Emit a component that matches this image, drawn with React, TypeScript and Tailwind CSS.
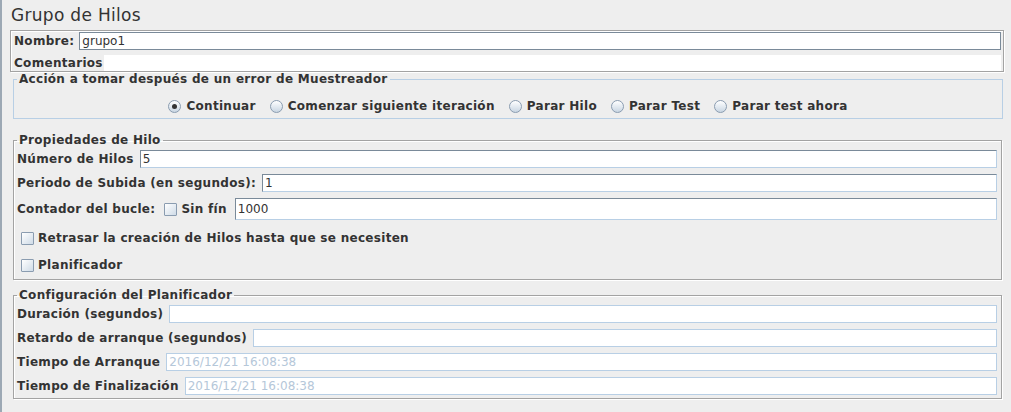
import React from "react";

function Check({ className = "" }: { className?: string }) {
  return (
    <span
      className={
        "inline-block w-[13px] h-[13px] shrink-0 border border-[#8a9cb0] rounded-[1px] bg-gradient-to-br from-white to-[#cfdbe7] " +
        className
      }
    />
  );
}

function Radio({ checked = false }: { checked?: boolean }) {
  return (
    <span className="relative inline-flex items-center justify-center w-[13px] h-[13px] shrink-0 rounded-full border border-[#8a9cb0] bg-gradient-to-b from-white to-[#c9d6e3]">
      {checked && <span className="w-[5px] h-[5px] rounded-full bg-[#333]" />}
    </span>
  );
}

function Field({ value = "", placeholder = false, light = false, h = "h-[18px]" }: { value?: string; placeholder?: boolean; light?: boolean; h?: string }) {
  return (
    <div
      className={
        "flex-1 flex items-center bg-white pl-[2px] text-[12px] font-normal tracking-normal " +
        h +
        " " +
        (light ? "border border-[#b8cfe5]" : "border border-[#b8cfe5] border-t-[#7a8a99] border-l-[#7a8a99]") +
        " " +
        (placeholder ? "text-[#b5c7d9]" : "text-[#333]")
      }
    >
      {value}
    </div>
  );
}

const etched = "border border-[#a3a3a3] shadow-[inset_1px_1px_0_#ffffff,1px_1px_0_#ffffff]";

export default function App() {
  return (
    <div className="w-[1011px] h-[412px] overflow-hidden bg-[#eeeeee] border-l-2 border-[#9ca8b4] font-['DejaVu_Sans',sans-serif] text-[#333333]">
      <div className="h-[30px] pl-[9px] pt-[5px] text-[17px] leading-[20px] tracking-[0.3px]">Grupo de Hilos</div>

      <div className={"ml-[8px] w-[994px] h-[42px] flex flex-col px-[2px] pt-[1px] " + etched}>
        <div className="flex items-center h-[18px] gap-[5px]">
          <span className="font-bold text-[12px] pl-[1px] tracking-[0.3px]">Nombre:</span>
          <div className="flex-1 h-[18px] bg-white border border-[#7a8a99] flex items-center pl-[2px] text-[12px]">grupo1</div>
        </div>
        <div className="flex items-center h-[17px] mt-[4px]">
          <span className="font-bold text-[12px] pl-[1px] pr-[1px] tracking-[0.3px]">Comentarios</span>
          <div className="flex-1 h-[16px] bg-white" />
        </div>
      </div>

      <fieldset className="ml-[11px] w-[990px] h-[47px] border border-[#b8cfe5]">
        <legend className="ml-[3px] px-[2px] font-bold text-[12px] leading-[14px] tracking-[0.3px]">Acción a tomar después de un error de Muestreador</legend>
        <div className="flex justify-center items-center gap-[14px] pt-[13px] text-[12px] font-bold leading-[14px] tracking-[0.3px]">
          <label className="flex items-center gap-[5px]"><Radio checked />Continuar</label>
          <label className="flex items-center gap-[5px]"><Radio />Comenzar siguiente iteración</label>
          <label className="flex items-center gap-[5px]"><Radio />Parar Hilo</label>
          <label className="flex items-center gap-[5px]"><Radio />Parar Test</label>
          <label className="flex items-center gap-[5px]"><Radio />Parar test ahora</label>
        </div>
      </fieldset>

      <fieldset className={"mt-[14px] ml-[11px] w-[989px] h-[147px] px-[3px] " + etched}>
        <legend className="ml-0 px-[2px] font-bold text-[12px] leading-[14px] tracking-[0.3px]">Propiedades de Hilo</legend>
        <div className="flex flex-col text-[12px] font-bold leading-[14px] tracking-[0.3px] pr-[1px]">
          <div className="flex items-center gap-[6px] mt-[3px] h-[18px]">
            <span>Número de Hilos</span>
            <Field value="5" />
          </div>
          <div className="flex items-center gap-[6px] mt-[6px] h-[18px]">
            <span>Periodo de Subida (en segundos):</span>
            <Field value="1" />
          </div>
          <div className="flex items-center mt-[6px] h-[22px]">
            <span>Contador del bucle:</span>
            <Check className="ml-[9px]" />
            <span className="ml-[4px]">Sin fín</span>
            <div className="ml-[8px] flex-1 flex">
              <Field value="1000" h="h-[22px]" />
            </div>
          </div>
          <div className="flex items-center gap-[4px] mt-[9px] h-[18px] pl-[4px]">
            <Check />
            <span>Retrasar la creación de Hilos hasta que se necesiten</span>
          </div>
          <div className="flex items-center gap-[4px] mt-[9px] h-[18px] pl-[4px]">
            <Check />
            <span>Planificador</span>
          </div>
        </div>
      </fieldset>

      <fieldset className={"mt-[8px] ml-[11px] w-[989px] h-[111px] px-[3px] " + etched}>
        <legend className="ml-0 px-[2px] font-bold text-[12px] leading-[14px] tracking-[0.3px]">Configuración del Planificador</legend>
        <div className="flex flex-col text-[12px] font-bold leading-[14px] tracking-[0.3px] pr-[1px]">
          <div className="flex items-center gap-[6px] mt-[3px] h-[18px]">
            <span>Duración (segundos)</span>
            <Field light />
          </div>
          <div className="flex items-center gap-[6px] mt-[6px] h-[18px]">
            <span>Retardo de arranque (segundos)</span>
            <Field light />
          </div>
          <div className="flex items-center gap-[6px] mt-[6px] h-[18px]">
            <span>Tiempo de Arranque</span>
            <Field light placeholder value="2016/12/21 16:08:38" />
          </div>
          <div className="flex items-center gap-[6px] mt-[6px] h-[18px]">
            <span>Tiempo de Finalización</span>
            <Field light placeholder value="2016/12/21 16:08:38" />
          </div>
        </div>
      </fieldset>
    </div>
  );
}
